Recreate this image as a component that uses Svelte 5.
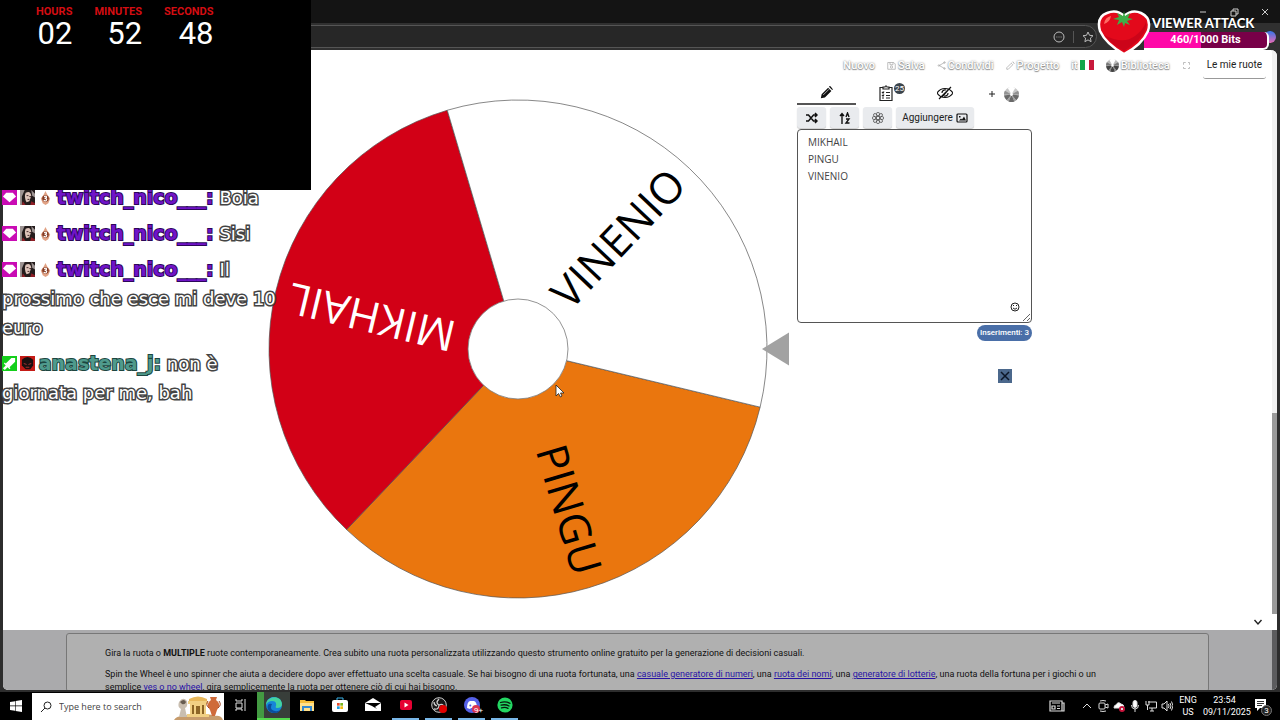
<script lang="ts">
  type Slice = { name: string; fill: string; color: string };

  const slices: Slice[] = [
    { name: "PINGU", fill: "#ea760e", color: "#000" },
    { name: "MIKHAIL", fill: "#d20016", color: "#fff" },
    { name: "VINENIO", fill: "#fff", color: "#000" },
  ];

  const radius = 249;
  const hub = 50;
  const startAngle = 13.5;
  const sweep = 360 / slices.length;

  let entries = $state("MIKHAIL\nPINGU\nVINENIO");
  let count = $derived(entries.split("\n").filter((line) => line.trim()).length);
  let search = $state("");

  const timer = [
    { label: "HOURS", value: "02" },
    { label: "MINUTES", value: "52" },
    { label: "SECONDS", value: "48" },
  ];

  const messages = [
    { user: "twitch_nico___", text: "Boia", sub: true },
    { user: "twitch_nico___", text: "Sisi", sub: true },
    { user: "twitch_nico___", text: "Il prossimo che esce mi deve 10 euro", sub: true },
    { user: "anastena_j", text: "non è giornata per me, bah", sub: false },
  ];

  function point(angle: number) {
    const rad = (angle * Math.PI) / 180;
    return `${250 + radius * Math.cos(rad)} ${250 + radius * Math.sin(rad)}`;
  }

  function slicePath(index: number) {
    const from = startAngle + index * sweep;
    return `M250 250 L${point(from)} A${radius} ${radius} 0 0 1 ${point(from + sweep)} Z`;
  }
</script>

{#snippet miniWheel()}
  <svg class="mini-wheel" viewBox="0 0 16 16" aria-hidden="true">
    <circle cx="8" cy="8" r="8" fill="#bbb" />
    <path d="M8 8 0 9a8 8 0 0 0 3 5zM8 8l-3 7.400a8 8 0 0 0 6 0zM8 8l5 6a8 8 0 0 0 3-5z" fill="#444" />
    <path d="M8 8 3 14l2 1.400zM8 8l5 6-2 1.400z" fill="#888" />
    <path d="M8 8 1 4a8 8 0 0 0-1 4zM8 8l7-4a8 8 0 0 1 1 4z" fill="#777" />
    <path d="M8 8 4 1a8 8 0 0 1 8 0z" fill="#fff" />
    <circle cx="8" cy="8" r="1.500" fill="#fff" />
  </svg>
{/snippet}

<div class="desktop">
  <header class="browser">
    <div class="titlebar">
      <button aria-label="Minimize"><svg viewBox="0 0 10 10"><path d="M2 5h6" /></svg></button>
      <button aria-label="Restore"><svg viewBox="0 0 10 10"><path d="M2 4h5v5H2zM4 4V2h5v5H7" /></svg></button>
      <button aria-label="Close"><svg viewBox="0 0 10 10"><path d="m2 2 6 6M8 2 2 8" /></svg></button>
    </div>
    <div class="toolbar">
      <div class="address">
        <button aria-label="Page actions">
          <svg viewBox="0 0 12 12"><circle cx="6" cy="6" r="5" /><path d="M3.500 6h.8M5.600 6h.8M7.700 6h.8" /></svg>
        </button>
        <span class="separator"></span>
        <button aria-label="Add to favorites">
          <svg viewBox="0 0 12 12"><path d="m6 1 1.500 3.300 3.500.4-2.600 2.400.7 3.600L6 8.900l-3.100 1.800.7-3.600L1 4.700l3.500-.4z" /></svg>
        </button>
      </div>
      <span class="profile"></span>
    </div>
  </header>

  <div class="window">
    <div class="content">
      <nav>
        <a href="#nuovo">Nuovo</a>
        <a href="#salva">
          <svg class="nav-icon" viewBox="0 0 12 12"><path d="M1 2h8l2 2v7H1zM4 2v3h4V2" /><circle cx="6" cy="8" r="1.500" /></svg>Salva
        </a>
        <a href="#condividi">
          <svg class="nav-icon" viewBox="0 0 12 12"><path d="m10 2-7 4 7 4" /><circle cx="10" cy="2" r="1" /><circle cx="2.500" cy="6" r="1" /><circle cx="10" cy="10" r="1" /></svg>Condividi
        </a>
        <a href="#progetto">
          <svg class="nav-icon" viewBox="0 0 12 12"><path d="m1 9 6-6 2 2-6 6H1zM8 2l1-1 2 2-1 1" /></svg>Progetto
        </a>
        <a href="#lingua">it
          <svg class="flag" viewBox="0 0 14 10"><path fill="#12a64b" d="M0 0h5v10H0z" /><path fill="#fff" d="M5 0h4v10H5z" /><path fill="#c8193c" d="M9 0h5v10H9z" /></svg>
        </a>
        <a href="#biblioteca">{@render miniWheel()}Biblioteca</a>
        <a href="#schermo" aria-label="Schermo intero">
          <svg class="nav-icon" viewBox="0 0 12 12"><path d="M2 5V2h3M8 2h2v3M10 8v2H8M5 10H2V8" /></svg>
        </a>
        <button class="mine">Le mie ruote</button>
      </nav>

      <main>
        <svg class="wheel" viewBox="0 0 522 500" role="img" aria-label="Ruota">
          {#each slices as slice, i}
            <path d={slicePath(i)} fill={slice.fill} stroke="#555" stroke-width="0.700" />
          {/each}
          {#each slices as slice, i}
            <text
              x="235"
              y="12"
              text-anchor="end"
              fill={slice.color}
              transform="translate(250 250) rotate({startAngle + (i + 0.5) * sweep})">{slice.name}</text>
          {/each}
          <circle cx="250" cy="250" r={hub} fill="#fff" stroke="#777" stroke-width="0.800" />
          <path d="M494 250 521 233.500V266.500z" fill="#a2a2a2" />
        </svg>

        <section class="panel">
          <div class="tabs">
            <button class="tab active" aria-label="Modifica">
              <svg viewBox="0 0 16 16"><path fill="#111" d="M1 15l1-5 8-8 4 4-8 8zM11 1l1-1q1 0 3 3l1 1-1 1z" /><path stroke="#fff" stroke-width=".8" d="m4 11 7-7" /></svg>
            </button>
            <button class="tab" aria-label="Risultati">
              <svg viewBox="0 0 16 16" fill="none" stroke="#222" stroke-width="1.200"><path d="M5 2.500H2v13h12v-13h-3M5 4V2h2q1-2.500 2 0h2v2zM4 7l1 1 1-1.500M8 7.500h4M4 10l1 1 1-1.500M8 10.500h4M4 13h2M8 13h4" /></svg>
              <span class="badge">25</span>
            </button>
            <button class="tab" aria-label="Nascondi">
              <svg viewBox="0 0 16 16" fill="none" stroke="#111" stroke-width="1.200"><path d="M0 8Q3 3.500 8 3.500T16 8Q13 12.500 8 12.500T0 8zM2 14 14 2M5 12 12 4" /><path d="M5 8a3 3 0 0 1 4-3M11 8a3 3 0 0 1-4 3" /></svg>
            </button>
            <button class="add" aria-label="Nuova ruota">
              <svg viewBox="0 0 8 8"><path d="M4 1v6M1 4h6" stroke="#222" /></svg>
            </button>
            <span class="faded">{@render miniWheel()}</span>
          </div>

          <div class="tools">
            <button aria-label="Mescola">
              <svg viewBox="0 0 12 12" fill="none" stroke="#111" stroke-width="1.500"><path d="M0 3h2.500l5 6H11M0 9h2.500l5-6H11M9 1l2 2-2 2M9 7l2 2-2 2" /></svg>
            </button>
            <button aria-label="Ordina">
              <svg viewBox="0 0 12 12" fill="none" stroke="#111" stroke-width="1.400"><path d="M3 12V2M1 4l2-2.500L5 4M7 5l1.500-4L10 5M7 7h3l-3 4h3.500" /></svg>
            </button>
            <button aria-label="Colori">
              <svg viewBox="0 0 12 12" fill="none" stroke="#444" stroke-width=".7">
                {#each [0, 45, 90, 135, 180, 225, 270, 315] as angle}
                  <ellipse cx="6" cy="2.200" rx="1.500" ry="2" transform="rotate({angle} 6 6)" />
                {/each}
                <circle cx="6" cy="6" r="1.800" />
              </svg>
            </button>
            <button class="wide">
              Aggiungere
              <svg viewBox="0 0 12 12" fill="none" stroke="#111" stroke-width="1.200"><rect x="1" y="2" width="10" height="8" rx="1" /><path fill="#111" stroke="none" d="m3 8.500 2-2 1 1 2-3 2 4zM3 4h1.500v1.500H3z" /></svg>
            </button>
          </div>

          <div class="entries">
            <textarea aria-label="Inserimenti" spellcheck="false" bind:value={entries}></textarea>
            <button class="emoji" aria-label="Emoji">
              <svg viewBox="0 0 10 10" fill="none" stroke="#222"><circle cx="5" cy="5" r="4" /><path d="M3 6q2 2.500 4 0M3.500 3v1M6.500 3v1" /></svg>
            </button>
          </div>

          <div class="below">
            <span class="pill">Inserimenti: {count}</span>
            <button class="dismiss" aria-label="Chiudi">
              <svg viewBox="0 0 14 14"><path d="m3 3 8 8M11 3l-8 8" stroke="#0c1626" stroke-width="1.500" /></svg>
            </button>
          </div>
        </section>

        <button class="collapse" aria-label="Comprimi">
          <svg viewBox="0 0 10 10" fill="none" stroke="#222" stroke-width="1.400"><path d="m1.500 3 3.500 4 3.500-4" /></svg>
        </button>
      </main>

      <div class="info">
        <article>
          <p>Gira la ruota o <b>MULTIPLE</b> ruote contemporaneamente. Crea subito una ruota personalizzata utilizzando questo strumento online gratuito per la generazione di decisioni casuali.</p>
          <p>Spin the Wheel è uno spinner che aiuta a decidere dopo aver effettuato una scelta casuale. Se hai bisogno di una ruota fortunata, una <a href="#numeri">casuale generatore di numeri</a>, una <a href="#nomi">ruota dei nomi</a>, una <a href="#lotterie">generatore di lotterie</a>, una ruota della fortuna per i giochi o un semplice <a href="#yesno">yes o no wheel</a>, gira semplicemente la ruota per ottenere ciò di cui hai bisogno.</p>
        </article>
      </div>
    </div>
    <div class="scrollbar"></div>
  </div>

  <footer class="taskbar">
    <button class="start" aria-label="Start">
      <svg viewBox="0 0 12 12" fill="#fff"><path d="M0 2l5-.8v4.400H0zM5.600 1.100 12 0v5.600H5.600zM0 6.200h5v4.500L0 10zM5.600 6.200H12V12l-6.400-1z" /></svg>
    </button>
    <label class="search">
      <svg class="lens" viewBox="0 0 12 12" fill="none" stroke="#222"><circle cx="7.500" cy="4.500" r="3.500" /><path d="M5 7 1 11" /></svg>
      <input type="text" placeholder="Type here to search" bind:value={search} />
      <svg class="art" viewBox="0 0 50 26">
        <path d="M0 26q3-5 9-3 7-5 16-2 10-2 16 1 6-1 8 4z" fill="#c79c6c" />
        <path d="M5 8q4-6 8-1 1 6-2 7l2 9H5l2-8q-4-2-2-7z" fill="#c9beb0" />
        <path d="M6 8q4-4 6 0-1 3-4 2z" fill="#675c51" />
        <path d="M15 5q9-5 18 0v5H15z" fill="#e7b75a" />
        <path d="M14 7h20v3H14zM16 10h16v12H16z" fill="#f0cf83" />
        <path d="M18 11h2v9h-2zM22 12h4v8h-4zM28 11h2v9h-2z" fill="#8c6525" />
        <path d="M13 20h22v3H13z" fill="#f0cf83" />
        <path d="M36 3h7l-1 3q6 4 1 10l-2 6h-3l-2-6q-5-6 1-10z" fill="#cf6b3a" />
        <path d="M34 7q-3 4 1 7M45 7q3 4-1 7" fill="none" stroke="#9e4928" />
      </svg>
    </label>

    <div class="apps">
      <button aria-label="Task View">
        <svg class="small" viewBox="0 0 12 12" fill="none" stroke="#ddd"><path d="M1 0v2h6V0M1 4h6v5H1zM1 12v-2h6v2M10 0v3M10 5v7M9 4h2" /></svg>
      </button>
      <button class="current" aria-label="Edge">
        <svg viewBox="0 0 16 16"><circle cx="8" cy="8" r="8" fill="#1685d8" /><path d="M0 8C0-1 15-3 16 7q0 4-5 4-2 0-1-2 1-5-4-5-4 0-6 4z" fill="#43d3a0" /><path d="M1 5Q4 0 9 0q-7 2-8 5" fill="#35bce8" /><path d="M6 7q-3 6 3 7 3 1 6-2-3 5-8 4-7-2-5-8 1-2 4-1" fill="#0b4e9d" /></svg>
      </button>
      <button aria-label="File Explorer">
        <svg viewBox="0 0 16 16"><path d="M1 3h5l1 1h8v10H1z" fill="#f5bd3a" /><path d="M1 6h14v8H1z" fill="#ffe08a" /><path d="M3 9h10v5h-2v-3H5v3H3z" fill="#3288d0" /></svg>
      </button>
      <button aria-label="Microsoft Store">
        <svg viewBox="0 0 16 16"><path d="M5 4V1h6v3" fill="none" stroke="#3ab0e4" /><rect y="3" width="16" height="12" rx="2" fill="#fff" /><path d="M5 6h2.700v2.700H5z" fill="#e44d2e" /><path d="M8.300 6H11v2.700H8.300z" fill="#7ab51d" /><path d="M5 9.300h2.700V12H5z" fill="#1b9fe3" /><path d="M8.300 9.300H11V12H8.300z" fill="#f6b912" /></svg>
      </button>
      <button aria-label="Mail">
        <svg viewBox="0 0 16 16"><path d="m0 6 8-5 8 5v8H0z" fill="#fff" /><path d="M0 6h16l-6 4 2 2-5-3z" fill="#000" /></svg>
      </button>
      <button class="running" aria-label="YouTube">
        <svg viewBox="0 0 16 16"><rect x="2" y="3" width="12" height="10" rx="2" fill="#e60032" /><path d="m6.500 5.500 4 2.500-4 2.500z" fill="#fff" /></svg>
      </button>
      <button class="running" aria-label="OBS">
        <svg viewBox="0 0 16 16"><circle cx="8" cy="8" r="7.300" fill="#171717" stroke="#ccc" /><path d="M8 2q-4 4 0 6 4-2 5 2M8 8q0 5-5 4M3 5q0 3 3 4" fill="none" stroke="#ccc" stroke-width="1.300" /><circle cx="12" cy="12" r="4" fill="#e00000" /></svg>
      </button>
      <button class="running" aria-label="Discord">
        <svg viewBox="0 0 16 16"><circle cx="8" cy="8" r="8" fill="#5561e8" /><path d="M3 11q0-6 3-7h4q3 1 3 7l-3 1-1-1H7l-1 1z" fill="#fff" /><circle cx="6.300" cy="8.500" r="1" fill="#5561e8" /><circle cx="12" cy="12" r="4" fill="#dc3450" /></svg>
        <span class="unread">9+</span>
      </button>
      <button class="running" aria-label="Spotify">
        <svg viewBox="0 0 16 16"><circle cx="8" cy="8" r="7.600" fill="#23d662" /><path d="M3.500 5.500q5-1.500 9.500.8M4 8.200q4.500-1.200 8 .8M4.500 10.800q4-1 6.500.6" fill="none" stroke="#06180c" stroke-width="1.300" stroke-linecap="round" /></svg>
      </button>
    </div>

    <div class="tray">
      <svg class="news" viewBox="0 0 16 12" fill="none" stroke="#ddd" stroke-width="1.200"><path d="M1 1h12v10H1zM13 3h2v8h-2M3 3h8M3 6h3v3H3zM8 6h3M8 8.500h3" /></svg>
      <svg viewBox="0 0 12 12"><path d="m2 8 4-4 4 4" /></svg>
      <svg viewBox="0 0 12 12"><rect x="2" y="3" width="6" height="6" rx="1" /><path d="m8 5 3-1v4L8 7M3 1q3-1 6 0M3 11q3 1 6 0" /></svg>
      <svg viewBox="0 0 12 12"><path d="M1 8q0-3 2-3 2-4 5-1 3 0 3 4z" fill="#fff" /><circle cx="9" cy="9" r="3" fill="#c9143c" stroke="none" /><path d="m8 8 2 2M10 8l-2 2" /></svg>
      <svg viewBox="0 0 12 12"><rect x="4" y="0.500" width="4" height="7" rx="2" fill="#fff" /><path d="M2.500 5q0 4 3.500 4t3.500-4M6 9v3" /></svg>
      <svg viewBox="0 0 12 12"><path d="M3 2h8.500v6H4M7 8v3M5 11h4M1 1v4h3V1M2.500 5v5" /></svg>
      <svg viewBox="0 0 12 12"><path d="M1 4h2l3-3v10L3 8H1zM7.500 4q1 2 0 4M9 3q2 3 0 6M10.500 1.500q3 4 0 9" /></svg>
      <span class="lang">ENG<br />US</span>
      <span class="clock">23:54<br />09/11/2025</span>
      <button class="notices" aria-label="Notifications">
        <svg viewBox="0 0 16 16"><path d="M1 1h11v9H6l-3 3v-3H1z" fill="#fff" stroke="none" /><path d="M3 3.500h7M3 5.500h7M3 7.500h5" stroke="#333" /></svg>
        <span class="unread">3</span>
      </button>
    </div>
  </footer>

  <!-- stream overlays -->
  <ul class="chat">
    {#each messages as message}
      <li>
        {#if message.sub}
          <svg class="chat-badge" viewBox="0 0 16 16"><path d="M0 0h16v16H0z" fill="#c90bb4" /><path d="M4.500 3h7L15 7l-7 6-7-6z" fill="#fff" /></svg>
          <svg class="chat-badge" viewBox="0 0 16 16"><path d="M0 0h16v16H0z" fill="#241c1c" /><path d="M6 3q5-3 6 3l-2 6-3 1q-3-5-1-10z" fill="#dfc5bb" /><path d="M0 0h5L2 7v9H0zM12 0l4 4v4l-3-2z" fill="#9d9392" /><path d="m3 12 3 4H2zM12 12l4 2v2h-5z" fill="#8e1e26" /><path d="M7 6h2M10 7h2M8 10h2" stroke="#3a2022" /></svg>
          <svg class="chat-badge" viewBox="0 0 16 16"><path d="m8 1 2 4 3 4-2 5-3 2-3-2-2-5 3-4z" fill="#e1a284" /><circle cx="8" cy="9" r="3.500" fill="#843b24" /><path d="M6.500 7q3-1 2.500 1-1 1-2 1 3 0 2 2-1 1-3 0" fill="none" stroke="#fff" stroke-width="1.300" /></svg>
        {:else}
          <svg class="chat-badge" viewBox="0 0 16 16"><path d="M0 0h16v16H0z" fill="#14cf1b" /><path d="M14 2v4l-6 6 1 1-1 1-2-2-3 3-2-2 3-3-2-2 1-1 1 1 6-6z" fill="#fff" /></svg>
          <svg class="chat-badge" viewBox="0 0 16 16"><path d="M0 0h16v16H0z" fill="#c51b16" /><path d="M2 4q6-6 12 0v6l-3 4H6l-4-4z" fill="#1a1010" /><path d="m4 8 3 1M12 8 9 9M6 12h4" stroke="#a33" /></svg>
        {/if}
        <b class:purple={message.sub}>{message.user}:</b>
        {message.text}
      </li>
    {/each}
  </ul>

  <div class="timer">
    {#each timer as part}
      <div class="unit"><span>{part.label}</span><strong>{part.value}</strong></div>
    {/each}
  </div>

  <div class="attack">
    <svg class="tomato" viewBox="0 0 54 48">
      <path d="M27 45Q9 35 3 22-1 8 10 4 20 0 27 7 35 0 44 4q11 5 7 18Q45 36 27 45z" fill="#e3091b" stroke="#fff" stroke-width="2.500" />
      <path d="M49 13q2 14-22 29Q14 35 7 26q19 10 31 1 8-6 11-14z" fill="#b50018" opacity=".5" />
      <path d="M7 15q1-7 7-8-1 6-7 8z" fill="#ff6b64" />
      <path d="m27 2 1 5 5-3-2 5 5 1-6 2 3 4-5-2-1 4-2-5-5 3 2-5-6-1 6-2-2-4 6 3z" fill="#3fae49" />
    </svg>
    <div class="attack-body">
      <strong>VIEWER ATTACK</strong>
      <div class="bits">460/1000 Bits</div>
    </div>
  </div>

  <svg class="cursor" viewBox="0 0 10 14" aria-hidden="true"><path d="M1 1v11l2.500-2.500L5.500 13l1.500-1-1.500-3H9z" fill="#fff" stroke="#222" stroke-width=".8" /></svg>
</div>

<style>
  :global(body) {
    margin: 0;
    background: #000;
  }

  .desktop {
    position: relative;
    display: flex;
    flex-direction: column;
    height: 100vh;
    overflow: hidden;
    font-family: Roboto, "Liberation Sans", sans-serif;
    font-size: 10px;
    background: #2d2d2d;
  }

  button {
    display: flex;
    align-items: center;
    justify-content: center;
    padding: 0;
    border: 0;
    background: none;
    font: inherit;
    color: inherit;
    cursor: pointer;
  }

  svg {
    display: block;
    flex: none;
  }

  /* Browser frame */
  .titlebar {
    display: flex;
    justify-content: flex-end;
    height: 23px;
    background: #141414;
  }

  .titlebar button {
    width: 31px;
  }

  .titlebar svg {
    width: 10px;
    height: 10px;
    fill: none;
    stroke: #ccc;
  }

  .toolbar {
    display: flex;
    justify-content: space-between;
    align-items: center;
    height: 27px;
    padding-right: 4px;
    background: #303030;
  }

  .address {
    display: flex;
    align-items: center;
    justify-content: flex-end;
    gap: 8px;
    width: 86%;
    height: 23px;
    box-sizing: border-box;
    padding-right: 2px;
    border: 1px solid #555;
    border-radius: 0 12px 12px 0;
    background: #272727;
  }

  .address svg {
    width: 12px;
    height: 12px;
    fill: none;
    stroke: #bbb;
  }

  .separator {
    width: 1px;
    height: 12px;
    background: #555;
  }

  .profile {
    width: 12px;
    height: 12px;
    border-radius: 50%;
    background: linear-gradient(#3675e8, #e86ab4);
  }

  .window {
    display: flex;
    flex: 1;
    min-height: 0;
    margin: 0 3px 2px;
    border-radius: 0 6px 5px 5px;
    overflow: hidden;
    background: #fff;
  }

  .content {
    display: flex;
    flex: 1;
    flex-direction: column;
    min-width: 0;
  }

  .scrollbar {
    width: 5px;
    background: linear-gradient(#f1f1f1 363px, #9a9a9a 363px 564px, #fff 564px 580px, #5c5c5e 580px);
  }

  nav {
    display: flex;
    align-items: center;
    justify-content: flex-end;
    gap: 12px;
    height: 30px;
    padding-right: 6px;
    font-size: 11px;
    font-weight: 500;
  }

  nav a {
    display: flex;
    align-items: center;
    gap: 2px;
    color: #fff;
    text-decoration: none;
    text-shadow: 0 0 2px #777, 0 1px 1px #999;
  }

  .nav-icon {
    width: 9px;
    height: 9px;
    fill: none;
    stroke: #aaa;
  }

  .flag {
    width: 14px;
    height: 10px;
  }

  .mini-wheel {
    width: 13px;
    height: 13px;
  }

  .mine {
    height: 28px;
    padding: 0 4px;
    border-bottom: 1px solid #999;
    border-radius: 3px;
    font-size: 10px;
    font-weight: 400;
    color: #222;
  }

  main {
    position: relative;
    display: grid;
    grid-template-columns: 265fr 522fr 482fr;
    flex: none;
    padding-bottom: 31px;
  }

  .wheel {
    grid-column: 2;
    width: 100%;
    margin-top: 19px;
    overflow: visible;
  }

  .wheel text {
    font-family: "Open Sans", "Noto Sans", sans-serif;
    font-size: 43px;
    font-weight: 500;
  }

  .panel {
    grid-column: 3;
    width: 235px;
    margin-left: 7px;
  }

  .tabs {
    display: flex;
    align-items: center;
    height: 25px;
  }

  .tab {
    position: relative;
    width: 59px;
    height: 25px;
    box-sizing: border-box;
    padding-top: 2px;
    border-bottom: 2px solid transparent;
  }

  .tab.active {
    border-bottom-color: #555;
  }

  .tab svg {
    width: 16px;
    height: 16px;
  }

  .tab.active svg {
    width: 13px;
    height: 13px;
  }

  .badge {
    position: absolute;
    top: 3px;
    right: 10px;
    width: 11px;
    border-radius: 6px;
    background: #3b444c;
    color: #fff;
    font-size: 8px;
    line-height: 11px;
  }

  .add {
    width: 18px;
    margin-left: 9px;
    padding-top: 2px;
  }

  .add svg {
    width: 8px;
    height: 8px;
  }

  .faded {
    margin-left: 3px;
    padding-top: 3px;
    opacity: 0.8;
  }

  .faded .mini-wheel {
    width: 15px;
    height: 15px;
  }

  .tools {
    display: flex;
    gap: 4px;
    padding-top: 2px;
  }

  .tools button {
    width: 29px;
    height: 21px;
    border-radius: 3px;
    background: #e9ebee;
    box-shadow: 0 1px 1px #ccc;
    color: #222;
  }

  .tools .wide {
    width: 78px;
    gap: 3px;
  }

  .tools svg {
    width: 12px;
    height: 12px;
  }

  .entries {
    position: relative;
    margin-top: 1px;
  }

  textarea {
    display: block;
    width: 100%;
    height: 194px;
    box-sizing: border-box;
    padding: 4px 10px;
    border: 1px solid #555;
    border-radius: 4px;
    outline: 0;
    font-family: "Open Sans", "Noto Sans", sans-serif;
    font-size: 10px;
    line-height: 17px;
    color: #444;
  }

  .emoji {
    position: absolute;
    right: 12px;
    bottom: 11px;
  }

  .emoji svg {
    width: 10px;
    height: 10px;
  }

  .below {
    display: flex;
    flex-direction: column;
    align-items: flex-end;
    gap: 28px;
    padding-top: 2px;
  }

  .pill {
    padding: 0 3px;
    border-radius: 8px;
    background: #4a6fa8;
    color: #fff;
    font-size: 8px;
    font-weight: 500;
    line-height: 16px;
  }

  .dismiss {
    margin-right: 20px;
    background: #4b688c;
  }

  .dismiss svg {
    width: 14px;
    height: 14px;
  }

  .collapse {
    position: absolute;
    right: 0;
    bottom: 0;
    width: 28px;
    height: 17px;
    background: #fff;
  }

  .collapse svg {
    width: 10px;
    height: 10px;
  }

  /* Description below the wheel */
  .info {
    flex: 1;
    min-height: 0;
    overflow: hidden;
    padding: 3px 63px 0;
    background: #aaaaac;
  }

  article {
    height: 100%;
    padding: 0 100px 0 38px;
    border: 1px solid #777;
    border-radius: 3px;
    background: #b0b0b0;
    color: #111;
    font-size: 9px;
    line-height: 13px;
  }

  article p {
    margin: 0 0 8px;
  }

  article p:first-child {
    margin-top: 13px;
  }

  article a {
    color: #2813a5;
  }

  /* Windows taskbar */
  .taskbar {
    display: flex;
    align-items: stretch;
    height: 28px;
    background: #000;
    color: #fff;
  }

  .start {
    width: 32px;
  }

  .start svg {
    width: 12px;
    height: 12px;
  }

  .search {
    display: flex;
    align-items: center;
    width: 192px;
    box-sizing: border-box;
    padding-left: 8px;
    margin-top: 1px;
    background: #fff;
  }

  .lens {
    width: 12px;
    height: 12px;
  }

  .search input {
    flex: 1;
    min-width: 0;
    padding: 0 0 0 7px;
    border: 0;
    outline: 0;
    background: none;
    font-family: "Open Sans", "Noto Sans", sans-serif;
    font-size: 9px;
  }

  .search input::placeholder {
    color: #444;
  }

  .art {
    width: 50px;
    height: 26px;
    align-self: flex-end;
  }

  .apps {
    display: flex;
  }

  .apps button {
    position: relative;
    width: 33px;
    box-sizing: border-box;
    border-bottom: 2px solid transparent;
  }

  .apps svg {
    width: 16px;
    height: 16px;
  }

  .apps .small {
    width: 12px;
    height: 12px;
  }

  .apps .running {
    width: 27px;
    margin: 0 3px;
    border-bottom-color: #79b7e8;
  }

  .apps .current {
    border-bottom-color: #54d94e;
    background: linear-gradient(90deg, #439a42 7px, #383e3a 7px);
  }

  .unread {
    position: absolute;
    right: 2px;
    bottom: 2px;
    font-size: 8px;
    line-height: 10px;
  }

  .tray {
    display: flex;
    align-items: center;
    gap: 4px;
    margin-left: auto;
    padding-right: 8px;
    font-family: Roboto, "Open Sans", sans-serif;
    font-size: 9px;
    line-height: 12px;
    text-align: center;
  }

  .tray svg {
    width: 12px;
    height: 12px;
    fill: none;
    stroke: #ddd;
  }

  .tray .news {
    width: 16px;
    margin-right: 12px;
  }

  .lang {
    width: 20px;
    margin-left: 1px;
  }

  .clock {
    width: 43px;
    margin: 0 2px 0 1px;
  }

  .notices {
    position: relative;
    width: 20px;
    height: 20px;
  }

  .tray .notices svg {
    width: 16px;
    height: 16px;
  }

  .notices .unread {
    right: 0;
    bottom: 0;
    width: 9px;
    border: 1px solid #777;
    border-radius: 50%;
    background: #222;
    font-size: 8px;
    line-height: 9px;
  }

  /* Stream overlays */
  .timer {
    position: absolute;
    top: 0;
    left: 0;
    display: flex;
    align-items: flex-start;
    gap: 22px;
    width: 311px;
    height: 190px;
    box-sizing: border-box;
    padding: 4px 0 0 36px;
    background: #000;
  }

  .unit {
    display: flex;
    flex-direction: column;
    align-items: flex-end;
  }

  .unit span {
    color: #d40d12;
    font-size: 11px;
    font-weight: 700;
    line-height: 15px;
  }

  .unit strong {
    color: #fff;
    font-size: 31px;
    font-weight: 400;
    line-height: 30px;
  }

  .chat {
    position: absolute;
    top: 183px;
    left: 2px;
    width: 276px;
    margin: 0;
    padding: 0;
    list-style: none;
    font-family: "DejaVu Sans", sans-serif;
    font-size: 18px;
    line-height: 29px;
    color: #fff;
    -webkit-text-stroke: 3px #444;
    paint-order: stroke fill;
  }

  .chat li {
    margin-bottom: 7px;
  }

  .chat b {
    margin-left: -5px;
    color: #4f9a8c;
    font-size: 19px;
    -webkit-text-stroke: 2px #1d4640;
  }

  .chat b.purple {
    color: #7014c8;
    -webkit-text-stroke: 2px #2c0759;
  }

  .chat-badge {
    display: inline-block;
    width: 15px;
    height: 15px;
    margin-right: 3px;
    vertical-align: -1px;
  }

  .attack {
    position: absolute;
    top: 9px;
    right: 11px;
    display: flex;
  }

  .tomato {
    z-index: 1;
    width: 54px;
    height: 48px;
  }

  .attack-body {
    width: 125px;
    margin-left: -7px;
  }

  .attack-body strong {
    display: block;
    padding: 5px 0 0 8px;
    color: #fff;
    font-family: Lato, sans-serif;
    font-size: 13px;
    font-weight: 900;
    line-height: 18px;
    white-space: nowrap;
    text-shadow: 0 1px 1px #000;
  }

  .bits {
    box-sizing: border-box;
    border: solid #fff;
    border-width: 0 2px 2px 0;
    border-radius: 0 5px 6px 0;
    background: linear-gradient(90deg, #ff08a8 46%, #780048 46%);
    color: #fff;
    font-size: 11px;
    font-weight: 700;
    line-height: 16px;
    text-align: center;
  }

  .cursor {
    position: absolute;
    top: 384px;
    left: 555px;
    width: 10px;
    height: 14px;
  }
</style>
